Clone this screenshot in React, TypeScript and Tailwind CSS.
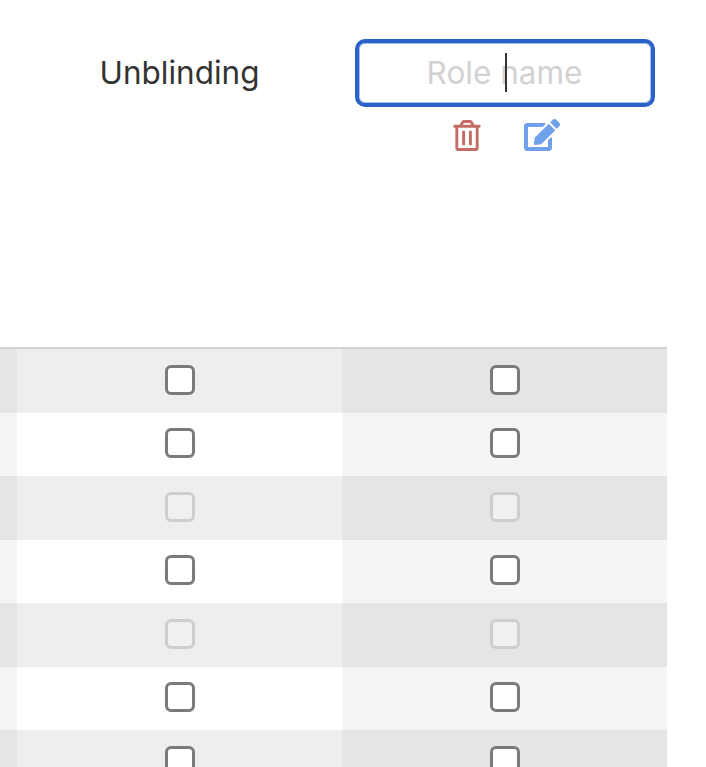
import { FaEdit, FaRegTrashAlt } from "react-icons/fa";

const rows = [
  { enabled: true, height: "h-[64px]", top: "pt-[16px]" },
  { enabled: true, height: "h-[63px]", top: "pt-[15px]" },
  { enabled: false, height: "h-[64px]", top: "pt-[16px]" },
  { enabled: true, height: "h-[63px]", top: "pt-[15px]" },
  { enabled: false, height: "h-[64px]", top: "pt-[16px]" },
  { enabled: true, height: "h-[63px]", top: "pt-[15px]" },
  { enabled: true, height: "h-[64px]", top: "pt-[16px]" },
];

function Checkbox({ enabled }: { enabled: boolean }) {
  return (
    <div
      className={
        enabled
          ? "h-[30px] w-[30px] rounded-[6px] border-[3px] border-[#7b7b7b] bg-white"
          : "h-[30px] w-[30px] rounded-[6px] border-[3px] border-[#cecece] bg-[#f0f0f0]"
      }
    />
  );
}

export default function App() {
  return (
    <div className="h-[767px] w-[706px] overflow-hidden bg-white font-['Inter',sans-serif] text-[#333333] antialiased">
      <div className="grid h-[347px] w-[667px] grid-cols-[17px_325px_325px]">
        <div />
        <div className="flex justify-center pt-[53px]">
          <span className="text-[31.5px] leading-[40px]">Unblinding</span>
        </div>
        <div className="flex flex-col items-center pt-[39px]">
          <div className="relative h-[68px] w-[300px]">
            <input
              readOnly
              placeholder="Role name"
              className="h-full w-full rounded-[10px] border-4 border-[#2a62c9] bg-white pb-[2px] text-center text-[31.5px] shadow-[inset_0_0_0_1px_#a9c1ea] outline-none placeholder:text-[#d2d2d2]"
            />
            <span className="absolute left-[150px] top-[14px] h-[39px] w-[2px] bg-[#333333]" />
          </div>
          <div className="ml-[3px] mt-[12px] flex items-center gap-[43px]">
            <FaRegTrashAlt className="h-[31px] w-[28px] text-[#c46b66]" />
            <FaEdit className="h-[32px] w-[36px] text-[#70a0ea]" />
          </div>
        </div>
      </div>
      <div className="w-[667px] border-t-2 border-[#d2d2d2]">
        {rows.map((row, i) => (
          <div key={i} className={`grid grid-cols-[17px_325px_325px] ${row.height}`}>
            <div className={i % 2 === 0 ? "bg-[#e5e5e5]" : "bg-[#f5f5f5]"} />
            <div className={`flex justify-center ${row.top} ${i % 2 === 0 ? "bg-[#eeeeee]" : "bg-white"}`}>
              <Checkbox enabled={row.enabled} />
            </div>
            <div className={`flex justify-center ${row.top} ${i % 2 === 0 ? "bg-[#e5e5e5]" : "bg-[#f5f5f5]"}`}>
              <Checkbox enabled={row.enabled} />
            </div>
          </div>
        ))}
      </div>
    </div>
  );
}
